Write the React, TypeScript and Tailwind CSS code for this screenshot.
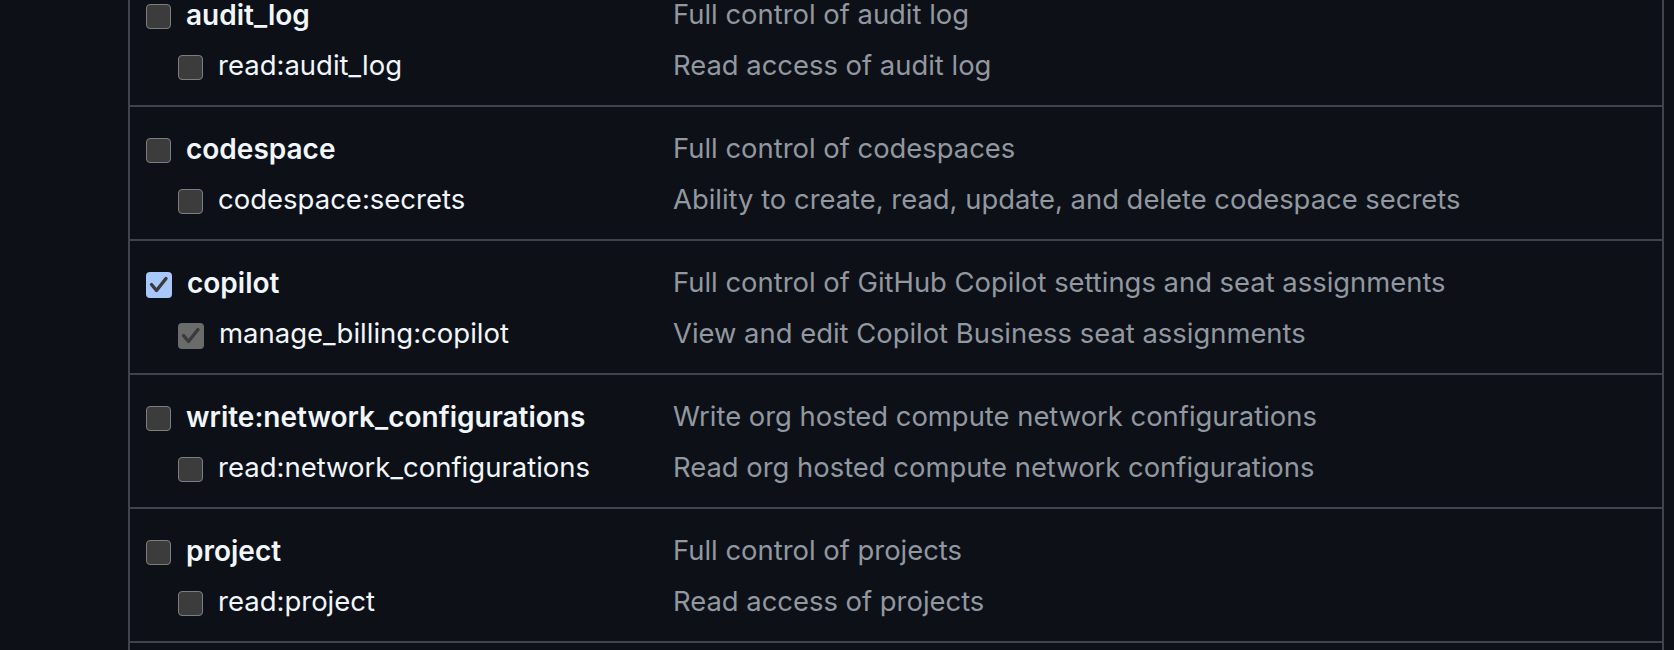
import React from "react";

type Item = { name: string; desc: string; checked?: boolean; disabled?: boolean };
type Group = { top: Item; sub: Item[] };

const groups: Group[] = [
  {
    top: { name: "audit_log", desc: "Full control of audit log" },
    sub: [{ name: "read:audit_log", desc: "Read access of audit log" }],
  },
  {
    top: { name: "codespace", desc: "Full control of codespaces" },
    sub: [{ name: "codespace:secrets", desc: "Ability to create, read, update, and delete codespace secrets" }],
  },
  {
    top: { name: "copilot", desc: "Full control of GitHub Copilot settings and seat assignments", checked: true },
    sub: [{ name: "manage_billing:copilot", desc: "View and edit Copilot Business seat assignments", checked: true, disabled: true }],
  },
  {
    top: { name: "write:network_configurations", desc: "Write org hosted compute network configurations" },
    sub: [{ name: "read:network_configurations", desc: "Read org hosted compute network configurations" }],
  },
  {
    top: { name: "project", desc: "Full control of projects" },
    sub: [{ name: "read:project", desc: "Read access of projects" }],
  },
];

function Box({ checked, disabled }: { checked?: boolean; disabled?: boolean }) {
  if (checked) {
    return (
      <span
        className={
          "flex h-[26px] w-[26px] shrink-0 items-center justify-center rounded-[4px] " +
          (disabled ? "bg-[#6b6b6b]" : "bg-[#a8c8fb]")
        }
      >
        <svg width="26" height="26" viewBox="0 0 26 26" fill="none">
          <path
            d="M5.5 12.5 L10.5 18.5 L20 6.5"
            stroke="#3b3b3b"
            strokeWidth="3.4"
            strokeLinecap="round"
            strokeLinejoin="round"
          />
        </svg>
      </span>
    );
  }
  return (
    <span className="block h-[25px] w-[25px] shrink-0 rounded-[4px] border-[1.5px] border-[#7d7d7d] bg-[#3c3c3c]" />
  );
}

function Row({ item, nested }: { item: Item; nested?: boolean }) {
  return (
    <div className="flex h-[51px] items-center">
      <div className={"flex w-[527px] shrink-0 items-center " + (nested ? "pl-[32px]" : "")}>
        <Box checked={item.checked} disabled={item.disabled} />
        <span
          className={
            "mb-[4px] ml-[15px] whitespace-nowrap leading-none text-[#f0f6fc] " +
            (nested ? "text-[27.5px] font-normal" : "text-[28px] font-semibold")
          }
        >
          {item.name}
        </span>
      </div>
      <span className="mb-[4px] whitespace-nowrap text-[27.4px] leading-none text-[#9198a1]">{item.desc}</span>
    </div>
  );
}

export default function App() {
  return (
    <div
      className="h-[650px] w-full overflow-hidden bg-[#0d1117]"
      style={{ fontFamily: "Inter, 'Noto Sans', sans-serif" }}
    >
      <div className="ml-[128px] mt-[-27px] h-[700px] w-[1536px] border-x-2 border-[#3d444d]">
        {groups.map((g) => (
          <div key={g.top.name} className="border-b-2 border-[#3d444d] pb-[12px] pl-4 pt-[18px]">
            <Row item={g.top} />
            {g.sub.map((s) => (
              <Row key={s.name} item={s} nested />
            ))}
          </div>
        ))}
      </div>
    </div>
  );
}
